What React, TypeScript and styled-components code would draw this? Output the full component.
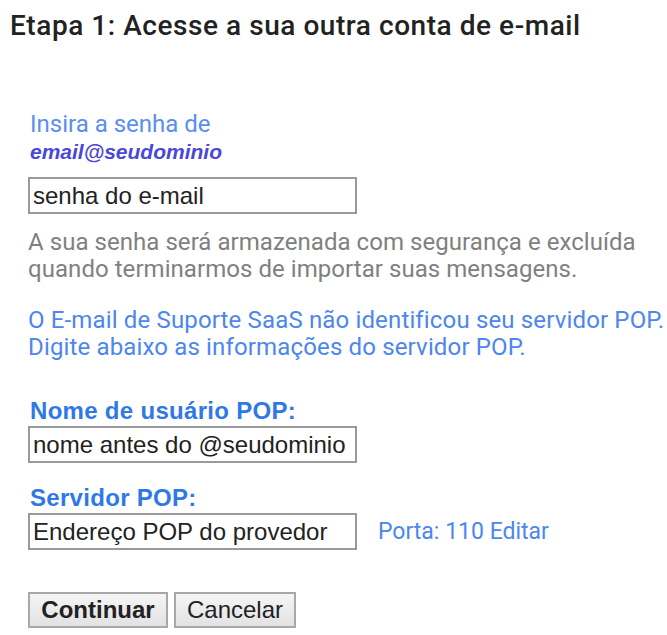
import styled, { createGlobalStyle } from 'styled-components';

const Global = createGlobalStyle`
  body {
    margin: 0;
    background: #fff;
    font-family: Roboto, "Liberation Sans", Arial, sans-serif;
  }
`;

const Page = styled.div`
  width: 667px;
  height: 635px;
  padding-top: 9px;
  box-sizing: border-box;
  overflow: hidden;
`;

const Title = styled.h1`
  margin: 0 0 0 10px;
  font-size: 28px;
  font-weight: 500;
  letter-spacing: 0.55px;
  color: #222;
  line-height: 34px;
  white-space: nowrap;
`;

const Form = styled.div`
  padding: 67px 0 0 28px;
  display: flex;
  flex-direction: column;
`;

const Prompt = styled.div`
  margin-left: 2px;
  color: #5a8ef2;
  font-size: 24px;
  line-height: 28px;
`;

const Address = styled.div`
  margin-left: 2px;
  color: #4a48d8;
  font-family: "Liberation Sans", Arial, sans-serif;
  font-weight: bold;
  font-style: italic;
  font-size: 21px;
  line-height: 28px;
`;

const Field = styled.div<{ $top: number }>`
  display: flex;
  align-items: center;
  gap: 21px;
  margin-top: ${p => p.$top}px;
`;

const Input = styled.div`
  width: 329px;
  height: 37px;
  box-sizing: border-box;
  border: 2px solid #9a9a9a;
  padding: 0 3px;
  display: flex;
  align-items: center;
  font-family: "Liberation Sans", Arial, sans-serif;
  font-size: 24px;
  color: #222;
  white-space: nowrap;
  overflow: hidden;
`;

const Note = styled.p<{ $tone: 'gray' | 'blue'; $top: number }>`
  margin: ${p => p.$top}px 0 0 0;
  font-size: 24px;
  line-height: 27px;
  white-space: nowrap;
  letter-spacing: ${p => (p.$tone === 'gray' ? 0.05 : 0.15)}px;
  color: ${p => (p.$tone === 'gray' ? '#808080' : '#4c86ef')};
`;

const Label = styled.div<{ $top: number }>`
  margin-top: ${p => p.$top}px;
  margin-left: 2px;
  color: #2f78e8;
  font-family: "Liberation Sans", Arial, sans-serif;
  font-size: 24px;
  font-weight: bold;
  letter-spacing: 0.3px;
  line-height: 28px;
`;

const PortLink = styled.span`
  color: #4c86ef;
  font-size: 23px;
`;

const Buttons = styled.div`
  display: flex;
  gap: 6px;
  margin-top: 42px;
`;

const Button = styled.button<{ $primary?: boolean }>`
  height: 36px;
  padding: 0;
  border: 2px solid #a8a8a8;
  background: linear-gradient(#f5f5f5, #e2e2e2);
  font-family: "Liberation Sans", Arial, sans-serif;
  font-size: 24px;
  font-weight: ${p => (p.$primary ? 'bold' : 'normal')};
  color: #222;
  width: ${p => (p.$primary ? 140 : 122)}px;
`;

export default function App() {
  return (
    <Page>
      <Global />
      <Title>Etapa 1: Acesse a sua outra conta de e-mail</Title>
      <Form>
        <Prompt>Insira a senha de</Prompt>
        <Address>email@seudominio</Address>
        <Field $top={11}>
          <Input>senha do e-mail</Input>
        </Field>
        <Note $tone="gray" $top={15}>
          A sua senha será armazenada com segurança e excluída
          <br />
          quando terminarmos de importar suas mensagens.
        </Note>
        <Note $tone="blue" $top={24}>
          O E-mail de Suporte SaaS não identificou seu servidor POP.
          <br />
          Digite abaixo as informações do servidor POP.
        </Note>
        <Label $top={36}>Nome de usuário POP:</Label>
        <Field $top={1}>
          <Input>nome antes do @seudominio</Input>
        </Field>
        <Label $top={21}>Servidor POP:</Label>
        <Field $top={1}>
          <Input>Endereço POP do provedor</Input>
          <PortLink>Porta: 110 Editar</PortLink>
        </Field>
        <Buttons>
          <Button $primary>Continuar</Button>
          <Button>Cancelar</Button>
        </Buttons>
      </Form>
    </Page>
  );
}
